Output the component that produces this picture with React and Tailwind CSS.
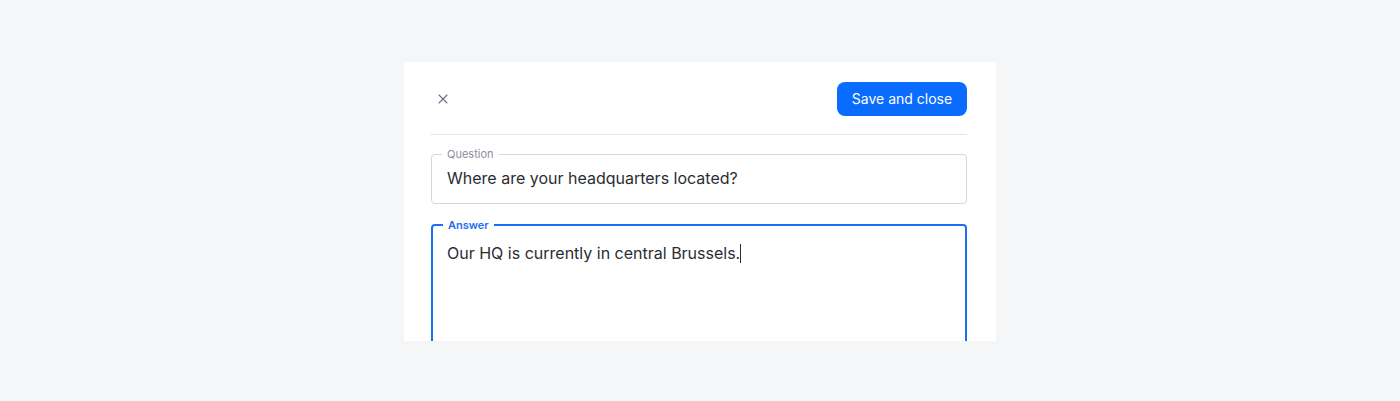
import { X } from 'lucide-react';

const FONT = "font-['Inter','Noto_Sans',sans-serif]";

function Field({ label, active, children, className = '' }) {
  return (
    <fieldset
      className={`rounded-[4px] px-[10px] ${active ? 'border-2 border-[#1b6ef3]' : 'border-[1.5px] border-[#d5d7dc]'} ${className}`}
    >
      <legend className={`px-[5px] text-[11px] leading-[14px] ${active ? 'text-[#1b6ef3] font-semibold' : 'text-[#8b8f99]'}`}>
        {label}
      </legend>
      {children}
    </fieldset>
  );
}

export default function App() {
  return (
    <div className={`min-h-[401px] bg-[#f5f6f8] flex justify-center pt-[62px] pb-[60px] ${FONT}`}>
      <div className="w-[592px] h-[279px] bg-white overflow-hidden pl-[26px] pr-[29px] pt-[20px]">
        <div className="flex items-center justify-between pb-[18px] border-b border-[#e6e7eb]">
          <button className="w-[28px] h-[28px] -ml-[1px] flex items-center justify-center text-[#6b6f85]">
            <X className="w-[16px] h-[16px]" strokeWidth={1.6} />
          </button>
          <button className="h-[34px] w-[130px] rounded-[8px] bg-[#0a6cff] text-white text-[14px] leading-none">
            Save and close
          </button>
        </div>

        <div className="flex flex-col gap-[14px] pt-[12px] pl-px">
          <Field label="Question" className="h-[57px] pb-[7px]">
            <div className="text-[16px] leading-[22px] text-[#2b2d33] pl-[5px] pt-[6px]">
              Where are your headquarters located?
            </div>
          </Field>
          <Field label="Answer" active className="h-[160px]">
            <div className="text-[16px] leading-[22px] text-[#2b2d33] pl-[4px] pt-[10px] flex items-center">
              Our HQ is currently in central Brussels.
              <span className="inline-block w-px h-[19px] bg-[#2b2d33]" />
            </div>
          </Field>
        </div>
      </div>
    </div>
  );
}
